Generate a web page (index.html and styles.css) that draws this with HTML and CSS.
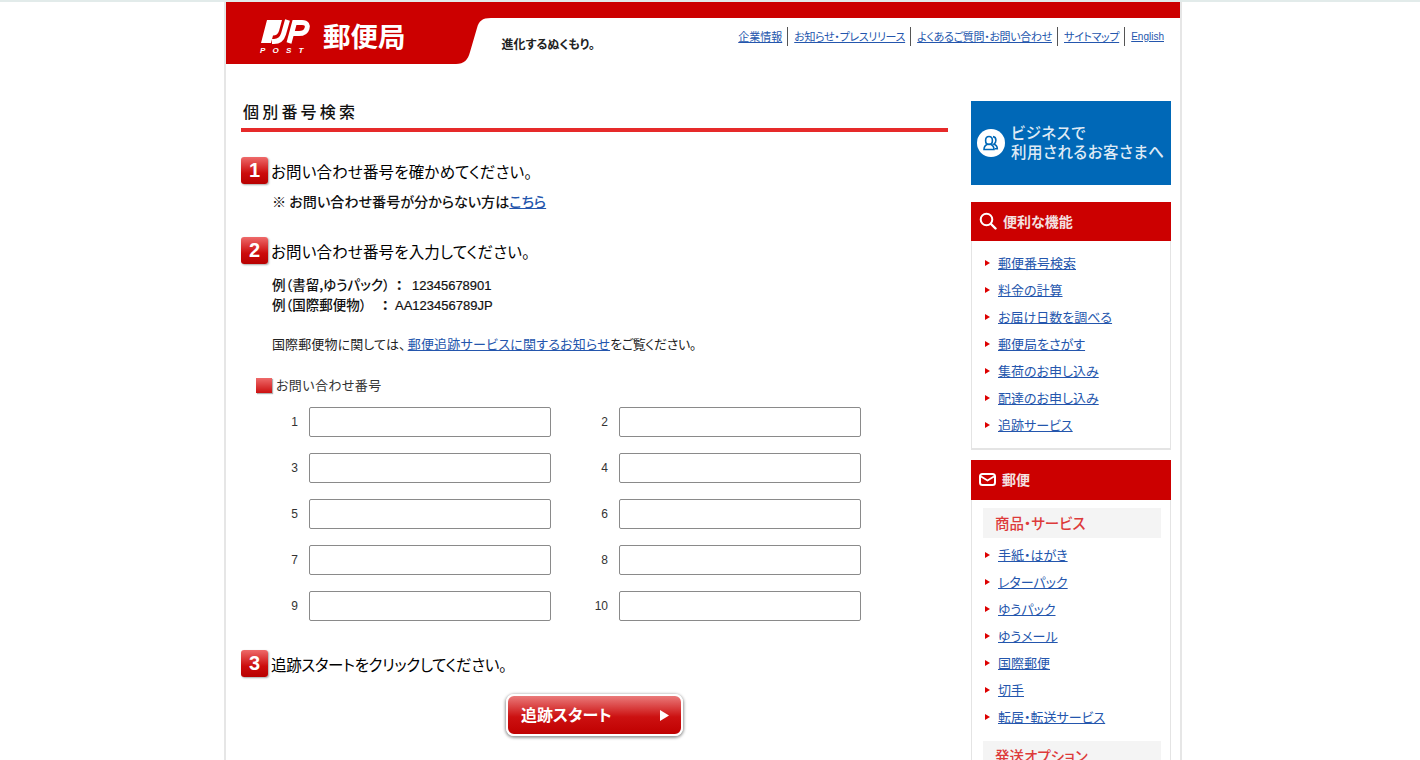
FILE: index.html
```html
<!DOCTYPE html>
<html lang="ja">
<head>
<meta charset="utf-8">
<title>個別番号検索</title>
<link rel="stylesheet" href="styles.css">
</head>
<body>
<div class="page">
  <header class="header">
    <svg class="header-bg" width="954" height="62" viewBox="0 0 954 62"><path fill="#cc0000" d="M0 0H954V16H265C256 16 253 19 251 26L244 50C242 58 238 62 230 62H0Z"/></svg>
    <div class="header-row">
      <div class="brand">
        <div class="mark">
          <svg class="mark-logo" width="50" height="26" viewBox="0 0 50 26"><path fill="#fff" d="M6 1H21L18 12C17 15 15 16.500 12 16.500L10 24H0Z"/><path fill="none" stroke="#fff" stroke-width="5" d="M26.500 1L22.500 15C21 20 18 22.500 13 22.500H11"/><path fill="none" stroke="#fff" stroke-width="5" d="M28 24L33.500 3.500H41C46 3.500 47 6.500 46 9.500 45 13 42 14.500 38 14.500H32"/></svg>
          <span class="mark-post">POST</span>
        </div>
        <span class="brand-name">郵便局</span>
        <span class="tagline">進化するぬくもり。</span>
      </div>
      <nav class="topnav">
        <a href="#" class="kanji">企業情報</a><a href="#">お知らせ・プレスリリース</a><a href="#">よくあるご質問・お問い合わせ</a><a href="#">サイトマップ</a><a href="#" class="en">English</a>
      </nav>
    </div>
  </header>

  <div class="columns">
    <main class="main">
      <h1 class="title">個別番号検索</h1>

      <section class="step step-1">
        <h2 class="step-head"><span class="badge">1</span>お問い合わせ番号を確かめてください。</h2>
        <p class="note">※ お問い合わせ番号が分からない方は<a href="#">こちら</a></p>
      </section>

      <section class="step step-2">
        <h2 class="step-head"><span class="badge">2</span>お問い合わせ番号を入力してください。</h2>
        <p class="example"><span class="ex-label">例（書留,ゆうパック）</span><span class="colon">：</span>12345678901</p>
        <p class="example"><span class="ex-label ex-label-intl">例（国際郵便物）</span><span class="colon">：</span>AA123456789JP</p>
        <p class="info">国際郵便物に関しては、<a href="#">郵便追跡サービスに関するお知らせ</a><span class="info-tail">をご覧ください。</span></p>
        <div class="field-label"><span class="square"></span>お問い合わせ番号</div>
        <div class="fields">
          <label class="field"><span class="num">1</span><input type="text"></label>
          <label class="field"><span class="num">2</span><input type="text"></label>
          <label class="field"><span class="num">3</span><input type="text"></label>
          <label class="field"><span class="num">4</span><input type="text"></label>
          <label class="field"><span class="num">5</span><input type="text"></label>
          <label class="field"><span class="num">6</span><input type="text"></label>
          <label class="field"><span class="num">7</span><input type="text"></label>
          <label class="field"><span class="num">8</span><input type="text"></label>
          <label class="field"><span class="num">9</span><input type="text"></label>
          <label class="field"><span class="num">10</span><input type="text"></label>
        </div>
      </section>

      <section class="step step-3">
        <h2 class="step-head"><span class="badge">3</span>追跡スタートをクリックしてください。</h2>
        <div class="submit-row">
          <button class="submit" type="button"><span class="submit-text">追跡スタート</span><svg width="9" height="11" viewBox="0 0 9 11"><path fill="#fff" d="M0 0L9 5.5L0 11Z"/></svg></button>
        </div>
      </section>
    </main>

    <aside class="side">
      <a class="biz" href="#">
        <svg class="biz-icon" width="28" height="28" viewBox="0 0 28 28"><circle cx="14" cy="14" r="14" fill="#fff"/><g fill="none" stroke="#0068b7" stroke-width="1.6"><path d="M12 7.500c2.200 0 3.400 1.700 3.400 3.900S14.200 15.500 12 15.500 8.600 13.600 8.600 11.400 9.800 7.500 12 7.500Z"/><path d="M7 20.500c0-3 1.800-4.600 3.500-5.300h3c1.700.7 3.500 2.300 3.500 5.300Z"/><path d="M16 7.600c1.800.2 2.900 1.800 2.900 3.700s-.8 3.300-2 3.900c1.800.6 3.400 2 3.400 4.500h-2.600"/></g></svg>
        <span class="biz-text">ビジネスで<br>利用されるお客さまへ</span>
      </a>

      <section class="box box-first">
        <h3 class="box-head">
          <svg width="18" height="18" viewBox="0 0 18 18"><circle cx="7.500" cy="7.500" r="5.800" fill="none" stroke="#fff" stroke-width="2"/><path d="M12 12L16.500 16.500" stroke="#fff" stroke-width="2.400" stroke-linecap="round"/></svg>
          便利な機能
        </h3>
        <ul class="links">
          <li><a href="#">郵便番号検索</a></li>
          <li><a href="#">料金の計算</a></li>
          <li><a href="#">お届け日数を調べる</a></li>
          <li><a href="#">郵便局をさがす</a></li>
          <li><a href="#">集荷のお申し込み</a></li>
          <li><a href="#">配達のお申し込み</a></li>
          <li><a href="#">追跡サービス</a></li>
        </ul>
      </section>

      <section class="box box-second">
        <h3 class="box-head">
          <svg width="17" height="13" viewBox="0 0 17 13"><rect x="1" y="1" width="15" height="11" rx="2.500" fill="none" stroke="#fff" stroke-width="2"/><path d="M2 3.500L8.500 7.500L15 3.500" fill="none" stroke="#fff" stroke-width="1.800"/></svg>
          郵便
        </h3>
        <h4 class="sub-head">商品・サービス</h4>
        <ul class="links links-tight">
          <li><a href="#">手紙・はがき</a></li>
          <li><a href="#">レターパック</a></li>
          <li><a href="#">ゆうパック</a></li>
          <li><a href="#">ゆうメール</a></li>
          <li><a href="#">国際郵便</a></li>
          <li><a href="#">切手</a></li>
          <li><a href="#">転居・転送サービス</a></li>
        </ul>
        <h4 class="sub-head sub-head-next">発送オプション</h4>
      </section>
    </aside>
  </div>
</div>
</body>
</html>
```

FILE: styles.css
```css
* { box-sizing: border-box; }
html { height: 760px; overflow: hidden; }
body {
  margin: 0;
  height: 760px;
  padding-right: 14px;
  overflow: hidden;
  background: #fff;
  color: #111;
  font-family: "Noto Sans CJK JP", "Liberation Sans", sans-serif;
  font-feature-settings: "palt";
  border-top: 2px solid #e2ebea;
}
a { color: #2456ad; }
h1, h2, h3, h4, p, ul { margin: 0; padding: 0; font-weight: 400; }

.page {
  width: 958px;
  height: 758px;
  margin: 0 auto;
  border-left: 2px solid #e6e6e6;
  border-right: 2px solid #e6e6e6;
}

/* header */
.header { display: grid; height: 62px; }
.header-bg, .header-row { grid-area: 1 / 1; }
.header-bg { display: block; }
.header-row { display: flex; justify-content: space-between; align-items: flex-start; }
.brand { display: flex; align-items: flex-start; padding: 17px 0 0 35px; }
.mark { width: 50px; height: 36px; }
.mark-logo { display: block; }
.mark-post {
  display: block;
  margin: 2px 0 0 -1px;
  color: #fff;
  font: italic 700 8px/8px "Liberation Sans", sans-serif;
  letter-spacing: 7.200px;
  white-space: nowrap;
}
.brand-name {
  margin: -1px 0 0 12px;
  color: #fff;
  font-size: 27.500px;
  line-height: 34px;
  font-weight: 700;
  letter-spacing: 0;
}
.tagline {
  margin: 16px 0 0 96px;
  font-size: 12px;
  line-height: 18px;
  font-weight: 700;
  color: #222;
}
.topnav { display: flex; padding: 25px 11px 0 0; }
.topnav a {
  font-size: 11px;
  line-height: 19px;
  letter-spacing: -.33px;
  padding: 0 5px 0 6px;
  border-left: 1px solid #555;
}
.topnav a:first-child { border-left: 0; }
.topnav .kanji { letter-spacing: 0; }
.topnav .en { font-family: "Liberation Sans", sans-serif; font-size: 10px; letter-spacing: 0; }

/* layout */
.columns { display: flex; gap: 23px; padding: 37px 0 0 15px; }
.main { width: 707px; flex: none; }
.side { width: 200px; flex: none; }

.title {
  height: 31px;
  padding-left: 2px;
  border-bottom: 4px solid #e62a2a;
  font-size: 16px;
  line-height: 20px;
  font-weight: 500;
  letter-spacing: 3.200px;
  font-feature-settings: normal;
  color: #111;
}

.step-1 { margin-top: 25px; }
.step-2 { margin-top: 26px; }
.step-3 { margin-top: 29px; }
.step-head {
  display: flex;
  align-items: center;
  gap: 3px;
  height: 27px;
  font-size: 15.500px;
  letter-spacing: .15px;
  font-weight: 400;
  color: #000;
}
.step-3 .step-head { letter-spacing: -.35px; }
.badge {
  width: 27px;
  height: 27px;
  border-radius: 3px;
  background: linear-gradient(#ee6a6a, #cc0c0c 60%, #b80000);
  box-shadow: 1px 1px 2px rgba(0, 0, 0, .35);
  color: #fff;
  font: 700 20px/27px "Liberation Sans", sans-serif;
  letter-spacing: 0;
  text-align: center;
}
.note {
  margin: 7px 0 0 31px;
  font-size: 14.100px;
  line-height: 20px;
  font-weight: 500;
}
.example {
  display: flex;
  align-items: baseline;
  height: 20px;
  margin-left: 31px;
  font-family: "Liberation Sans", "Noto Sans CJK JP", sans-serif;
  font-size: 13px;
  line-height: 20px;
  font-weight: 500;
  -webkit-text-stroke: .2px #111;
}
.ex-label { font-family: "Noto Sans CJK JP", sans-serif; font-size: 13.500px; width: 124px; -webkit-text-stroke: 0; }
.ex-label-intl { width: 110px; }
.colon { width: 16px; font-family: "Noto Sans CJK JP", sans-serif; font-weight: 700; text-align: left; }
.ex-label-intl + .colon { width: 13px; }
.step-2 .step-head { margin-bottom: 10px; }
.info {
  margin: 20px 0 0 31px;
  font-size: 13px;
  line-height: 20px;
  letter-spacing: .12px;
  color: #222;
}
.info a { margin-left: 2px; letter-spacing: .24px; }
.info-tail { letter-spacing: -.38px; }
.field-label {
  display: flex;
  align-items: center;
  gap: 4px;
  margin: 21px 0 0 15px;
  font-size: 13px;
  line-height: 20px;
  letter-spacing: .4px;
  color: #333;
}
.square {
  width: 16px;
  height: 15px;
  background: linear-gradient(#ee6a6a, #cc1010);
  box-shadow: 1px 1px 1px rgba(0, 0, 0, .3);
}
.fields {
  display: grid;
  grid-template-columns: 310px 310px;
  row-gap: 16px;
  margin-top: 12px;
}
.field { display: flex; align-items: center; }
.num {
  width: 57px;
  padding-right: 0;
  text-align: right;
  font: 12px/30px "Liberation Sans", sans-serif;
  color: #333;
}
.field input {
  width: 242px;
  height: 30px;
  margin: 0 0 0 11px;
  border: 1px solid #8a8a8a;
  border-radius: 2px;
  background: #fff;
}

.submit-row { display: flex; justify-content: center; margin-top: 17px; }
.submit {
  display: flex;
  align-items: center;
  justify-content: space-between;
  width: 177px;
  height: 42px;
  padding: 0 12px 0 13px;
  border: 2px solid #fff;
  border-radius: 8px;
  background: linear-gradient(#ea7a7a, #cc1111 55%, #c00000);
  box-shadow: 0 1px 3px 1px rgba(0, 0, 0, .4);
  color: #fff;
  font-family: inherit;
  font-size: 16px;
  font-weight: 700;
  font-feature-settings: "palt";
}
.submit-text { margin-top: -2px; }

/* sidebar */
.biz {
  display: flex;
  align-items: center;
  gap: 6px;
  height: 84px;
  padding: 0 0 0 6px;
  background: #0068b7;
  color: #dfeaf5;
  font-size: 15.500px;
  line-height: 19px;
  letter-spacing: .5px;
  text-decoration: none;
}
.biz-icon { flex: none; }
.biz-text { margin-top: -3px; font-weight: 500; white-space: nowrap; }
.box { border: 1px solid #e4e4e4; border-top: 0; border-bottom-width: 2px; }
.box-first { margin-top: 17px; height: 248px; }
.box-second { margin-top: 10px; height: 320px; }
.box-head {
  display: flex;
  align-items: center;
  gap: 6px;
  height: 39px;
  margin: 0 -1px;
  padding: 0 0 2px 8px;
  background: #cc0000;
  color: #f4e0e0;
  font-size: 14px;
  font-weight: 700;
}
.box-second .box-head { height: 40px; }
.links { list-style: none; padding: 8px 0 0 0; }
.links li {
  display: flex;
  align-items: center;
  height: 27px;
  padding-left: 26px;
  font-size: 13px;
}
.links li::before {
  content: "";
  margin: 0 8px 0 -13px;
  border-left: 5px solid #d00;
  border-top: 3px solid transparent;
  border-bottom: 3px solid transparent;
}
.links a { white-space: nowrap; }
.sub-head {
  height: 30px;
  margin: 8px 9px 0 11px;
  padding-left: 12px;
  background: #f4f4f4;
  color: #dd3a3a;
  font-size: 14.500px;
  line-height: 30px;
  font-weight: 500;
}
.links-tight { padding-top: 3.400px; }
.sub-head-next { margin-top: 11px; }
```
